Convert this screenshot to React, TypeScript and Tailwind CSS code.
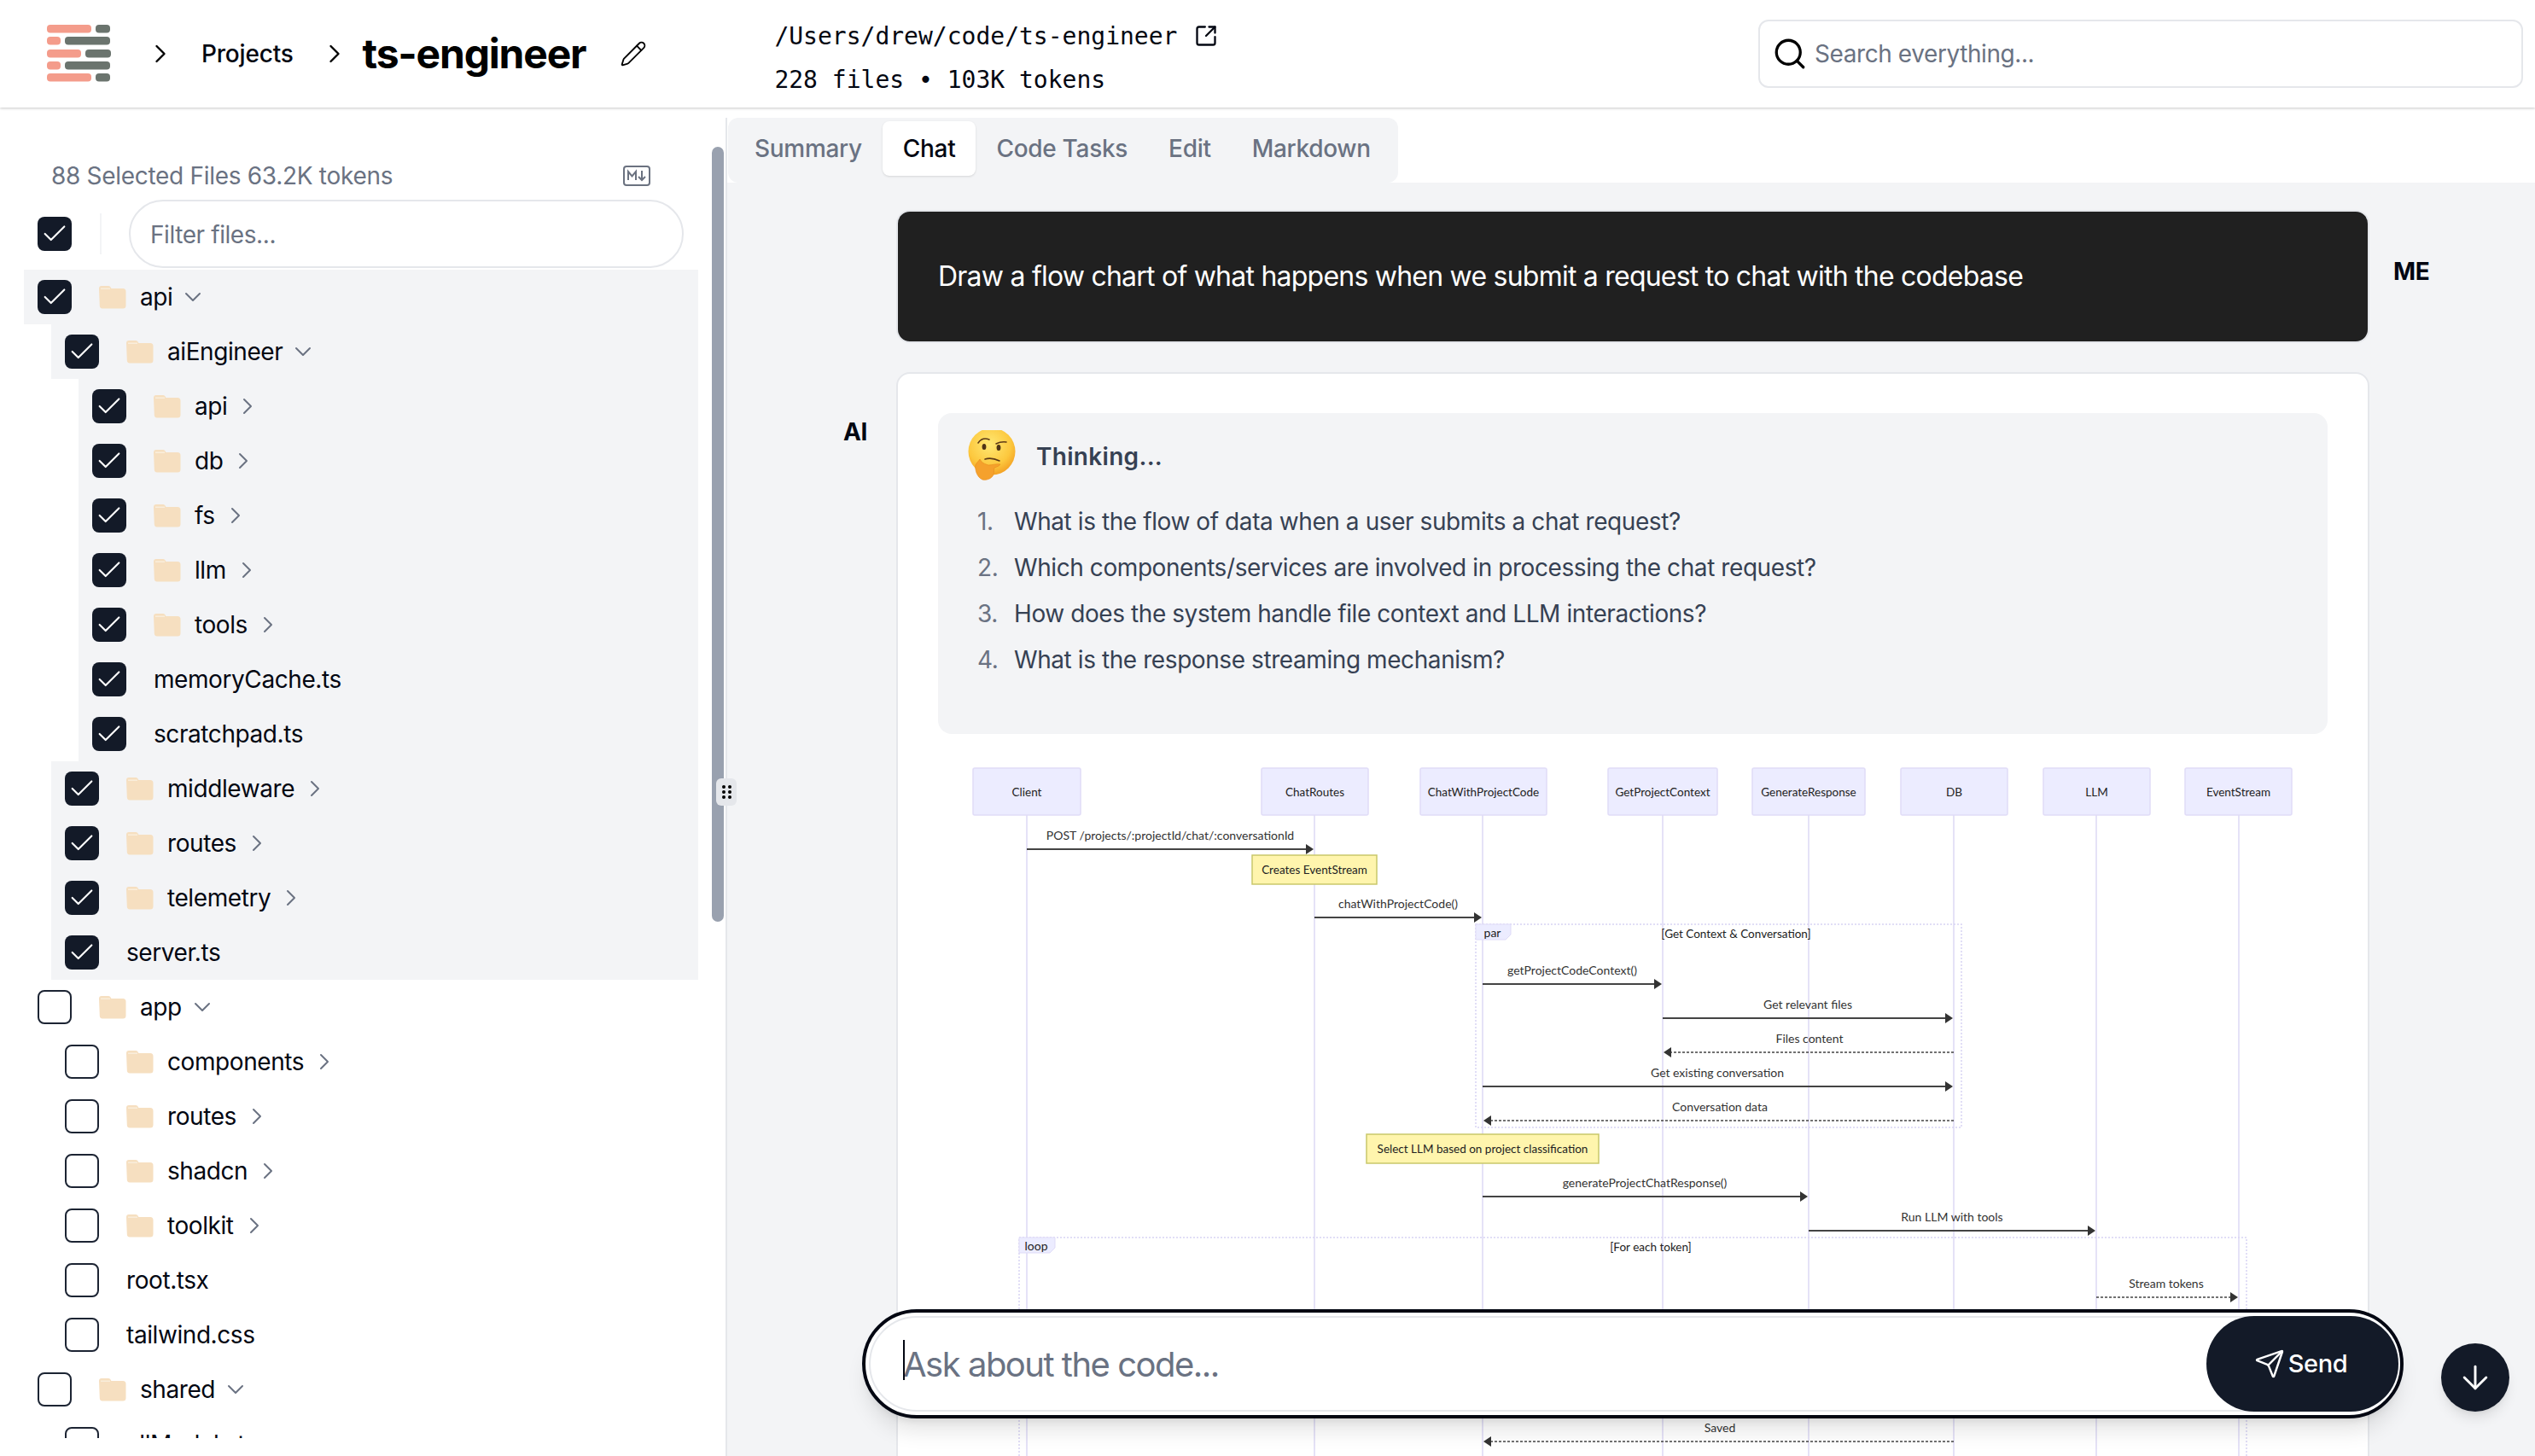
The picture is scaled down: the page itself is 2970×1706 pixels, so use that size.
import React from 'react'
import { Check, ChevronDown, ChevronRight, ArrowDown, Pencil, Search, Send, SquareArrowOutUpRight } from 'lucide-react'

type TreeNode = { name: string; open?: boolean; children?: TreeNode[]; folder?: boolean }

const apiTree: TreeNode = {
  name: 'api', folder: true, open: true, children: [
    {
      name: 'aiEngineer', folder: true, open: true, children: [
        { name: 'api', folder: true },
        { name: 'db', folder: true },
        { name: 'fs', folder: true },
        { name: 'llm', folder: true },
        { name: 'tools', folder: true },
        { name: 'memoryCache.ts' },
        { name: 'scratchpad.ts' },
      ],
    },
    { name: 'middleware', folder: true },
    { name: 'routes', folder: true },
    { name: 'telemetry', folder: true },
    { name: 'server.ts' },
  ],
}

const appTree: TreeNode = {
  name: 'app', folder: true, open: true, children: [
    { name: 'components', folder: true },
    { name: 'routes', folder: true },
    { name: 'shadcn', folder: true },
    { name: 'toolkit', folder: true },
    { name: 'root.tsx' },
    { name: 'tailwind.css' },
  ],
}

const sharedTree: TreeNode = {
  name: 'shared', folder: true, open: true, children: [{ name: 'allModels.ts' }],
}

const questions = [
  'What is the flow of data when a user submits a chat request?',
  'Which components/services are involved in processing the chat request?',
  'How does the system handle file context and LLM interactions?',
  'What is the response streaming mechanism?',
]

const tabs = ['Summary', 'Chat', 'Code Tasks', 'Edit', 'Markdown']

// x = left, w = width of the actor box, line = lifeline
const actors = [
  { name: 'Client', x: 1140, w: 126, line: 1203 },
  { name: 'ChatRoutes', x: 1478, w: 125, line: 1540 },
  { name: 'ChatWithProjectCode', x: 1664, w: 148, line: 1737 },
  { name: 'GetProjectContext', x: 1884, w: 128, line: 1948 },
  { name: 'GenerateResponse', x: 2053, w: 132, line: 2119 },
  { name: 'DB', x: 2227, w: 125, line: 2289 },
  { name: 'LLM', x: 2394, w: 125, line: 2456 },
  { name: 'EventStream', x: 2560, w: 125, line: 2623 },
]

const messages = [
  { label: 'POST /projects/:projectId/chat/:conversationId', cx: 1371, from: 1203, to: 1540, y: 995 },
  { label: 'chatWithProjectCode()', cx: 1638, from: 1540, to: 1737, y: 1075 },
  { label: 'getProjectCodeContext()', cx: 1842, from: 1737, to: 1948, y: 1153 },
  { label: 'Get relevant files', cx: 2118, from: 1948, to: 2289, y: 1193 },
  { label: 'Files content', cx: 2120, from: 2289, to: 1948, y: 1233, dashed: true },
  { label: 'Get existing conversation', cx: 2012, from: 1737, to: 2289, y: 1273 },
  { label: 'Conversation data', cx: 2015, from: 2289, to: 1737, y: 1313, dashed: true },
  { label: 'generateProjectChatResponse()', cx: 1927, from: 1737, to: 2119, y: 1402 },
  { label: 'Run LLM with tools', cx: 2287, from: 2119, to: 2456, y: 1442 },
  { label: 'Stream tokens', cx: 2538, from: 2456, to: 2623, y: 1520, dashed: true },
  { label: 'Saved', cx: 2015, from: 2289, to: 1737, y: 1689, dashed: true },
]

function Logo() {
  const rows = [
    [29, 52, 112, 17],
    [43, 16, 76, 53],
    [58, 40, 100, 30],
    [72, 16, 76, 53],
    [86, 52, 112, 17],
  ]
  return (
    <svg width="75" height="68" viewBox="55 29 75 68" className="shrink-0">
      {rows.map(([y, w, x2, w2]) => (
        <g key={y}>
          <rect x="55" y={y} width={w} height="9.5" rx="4" fill="#f49c8b" />
          <rect x={x2} y={y} width={w2} height="9.5" rx="4" fill="#6b746e" />
        </g>
      ))}
    </svg>
  )
}

function FolderIcon() {
  return (
    <svg width="32" height="27" viewBox="0 0 32 27" className="shrink-0">
      <path d="M3 0h8c1.6 0 2.6 1 3.4 3H28a3.5 3.5 0 0 1 3.5 3.5V23a3.5 3.5 0 0 1-3.5 3.5H4A3.5 3.5 0 0 1 .8 23L0 3a3 3 0 0 1 3-3z" fill="#f6dfc0" />
      <path d="M2 3.2h11" stroke="#fbf1e2" strokeWidth="1.2" />
    </svg>
  )
}

function Checkbox({ checked }: { checked: boolean }) {
  if (checked) {
    return (
      <div className="flex h-10 w-10 shrink-0 items-center justify-center rounded-lg bg-[#131a28] text-white">
        <Check size={34} strokeWidth={1.5} />
      </div>
    )
  }
  return <div className="h-10 w-10 shrink-0 rounded-lg border-2 border-[#1c2433]" />
}

function TreeRow({ node, checked }: { node: TreeNode; checked: boolean }) {
  return (
    <div>
      <div className={`flex h-16 items-center pl-4 ${checked ? 'bg-gray-100' : ''}`}>
        <Checkbox checked={checked} />
        {node.folder ? (
          <div className="ml-8 flex items-center">
            <FolderIcon />
            <span className="ml-4 text-[28px] text-gray-950">{node.name}</span>
            {node.open ? (
              <ChevronDown size={32} strokeWidth={1.5} className="ml-2 text-gray-500" />
            ) : (
              <ChevronRight size={32} strokeWidth={1.5} className="ml-2 text-gray-500" />
            )}
          </div>
        ) : (
          <span className="ml-8 text-[28px] text-gray-950">{node.name}</span>
        )}
      </div>
      {node.children && (
        <div className="ml-8">
          {node.children.map((child, i) => (
            <TreeRow key={child.name + i} node={child} checked={checked} />
          ))}
        </div>
      )}
    </div>
  )
}

function Sidebar() {
  return (
    <aside className="relative z-10 w-[850px] shrink-0 bg-white">
      <div className="mt-[60px] flex h-10 items-center justify-between pr-[88px] pl-[60px]">
        <span className="text-[28px] tracking-[-0.3px] text-gray-500">88 Selected Files 63.2K tokens</span>
        <svg width="32" height="24" viewBox="0 0 32 24" fill="none" stroke="#6b7280" strokeWidth="2">
          <rect x="1" y="1" width="30" height="22" rx="3" />
          <path d="M6 17V7l4.5 5.5L15 7v10M22 6v11M18 13l4 4 4-4" />
        </svg>
      </div>
      <div className="mt-2 flex h-20 items-center pl-11">
        <Checkbox checked />
        <div className="ml-[33px] h-12 w-0.5 bg-gray-100" />
        <input
          placeholder="Filter files..."
          className="ml-[32px] h-20 w-[650px] rounded-full border-2 border-gray-200 pt-0.5 pr-6 pl-[23px] text-[28px] outline-none placeholder:text-gray-500"
        />
      </div>
      <div className="mt-0.5 ml-7 h-[1369px] w-[790px] overflow-hidden">
        <TreeRow node={apiTree} checked />
        <TreeRow node={appTree} checked={false} />
        <TreeRow node={sharedTree} checked={false} />
      </div>
      {/* scrollbar and resize grip lie over the panel edge */}
      <div className="absolute top-[46px] left-[834px] h-[908px] w-3.5 rounded-full bg-gray-400" />
      <div className="absolute top-[786px] left-[839px] grid h-8 w-6 grid-cols-2 content-center justify-center gap-x-0.5 gap-y-[2px] rounded-md bg-gray-200 px-1.5">
        {[0, 1, 2, 3, 4, 5].map((i) => (
          <span key={i} className="h-1 w-1 justify-self-center rounded-full bg-black" />
        ))}
      </div>
    </aside>
  )
}

function Header() {
  return (
    <header className="relative z-20 flex h-[126px] shrink-0 items-center bg-white pr-[14px] pl-[55px] shadow-[0_1px_3px_rgba(0,0,0,0.22)]">
      <Logo />
      <ChevronRight size={36} strokeWidth={1.6} className="ml-10 shrink-0" />
      <span className="ml-[30px] text-[28px] font-medium tracking-[-0.2px] text-gray-950">Projects</span>
      <ChevronRight size={36} strokeWidth={1.6} className="ml-[30px] shrink-0" />
      <span className="ml-[15px] text-[48px] leading-none font-bold tracking-[-1.2px] text-black">ts-engineer</span>
      <Pencil size={32} strokeWidth={1.4} className="ml-10 shrink-0" />
      <div className="ml-[149px] flex flex-col pt-[9px] font-[family-name:'DejaVu_Sans_Mono',monospace] text-[28px] leading-[51px] tracking-normal text-gray-950">
        <div className="flex items-center">
          <span>/Users/drew/code/ts-engineer</span>
          <SquareArrowOutUpRight size={28} strokeWidth={2} className="ml-5" />
        </div>
        <span>228 files • 103K tokens</span>
      </div>
      <div className="ml-auto flex h-20 w-[896px] items-center rounded-xl border-2 border-gray-200 pl-[14px]">
        <Search size={42} strokeWidth={1.9} className="shrink-0 text-black" />
        <input
          placeholder="Search everything..."
          className="ml-2 flex-1 text-[28px] outline-none placeholder:text-gray-500"
        />
      </div>
    </header>
  )
}

function ThinkingFace() {
  return (
    <svg width="56" height="60" viewBox="8 7 56 60" className="shrink-0">
      <defs>
        <radialGradient id="face" cx="45%" cy="35%" r="70%">
          <stop offset="0%" stopColor="#ffe873" />
          <stop offset="65%" stopColor="#fcc83e" />
          <stop offset="100%" stopColor="#f29a1f" />
        </radialGradient>
      </defs>
      <circle cx="36" cy="32" r="27.5" fill="url(#face)" />
      <path d="M20 22c3-4.5 8-6 13-4M41 23c4-2 8-2.6 12-2" fill="none" stroke="#5d3a16" strokeWidth="1.6" strokeLinecap="round" />
      <ellipse cx="27" cy="26.5" rx="2.4" ry="3.6" fill="#4e3416" />
      <ellipse cx="44" cy="27.5" rx="2.4" ry="3.6" fill="#4e3416" />
      <path d="M28 41c5-1.6 11-.8 17 2" fill="none" stroke="#5d3a16" strokeWidth="1.6" strokeLinecap="round" />
      <path d="M22 41c-2 3-4 4-5 7-1 4 1 14 8 17 5 1 11-1 13-6 1-3 0-6 1-8 3-1 6-2 7-4-4-1-10 1-14 1-3-1-6-2-8-4l-2-3z" fill="#f5a12c" stroke="#e58a1b" strokeWidth="0.6" />
    </svg>
  )
}

function Message({ label, cx, from, to, y, dashed }: { label: string; cx: number; from: number; to: number; y: number; dashed?: boolean }) {
  const dir = to > from ? 1 : -1
  return (
    <g>
      <text x={cx} y={y - 11} textAnchor="middle" fontSize="14" fill="#333">{label}</text>
      <line x1={from} y1={y} x2={to - dir * 8} y2={y} stroke="#444" strokeWidth={dashed ? 1.5 : 2} strokeDasharray={dashed ? '3 2' : undefined} />
      <polygon points={`${to - dir},${y} ${to - dir * 10},${y - 6} ${to - dir * 10},${y + 6}`} fill="#333" />
    </g>
  )
}

function Note({ x, y, w, label }: { x: number; y: number; w: number; label: string }) {
  return (
    <g>
      <rect x={x} y={y} width={w} height="34" fill="#fff5ad" stroke="#c9c76b" strokeWidth="1.5" />
      <text x={x + w / 2} y={y + 22} textAnchor="middle" fontSize="13.5" fill="#222">{label}</text>
    </g>
  )
}

function Frame({ x, y, w, h, tag, tagW, title, titleX }: { x: number; y: number; w: number; h: number; tag: string; tagW: number; title: string; titleX: number }) {
  return (
    <g>
      <rect x={x} y={y} width={w} height={h} fill="none" stroke="#d8d3f3" strokeWidth="1.5" strokeDasharray="2 2" />
      <polygon points={`${x},${y} ${x + tagW},${y} ${x + tagW},${y + 12} ${x + tagW - 6},${y + 18} ${x},${y + 18}`} fill="#ececff" stroke="#dfdbf7" />
      <text x={x + tagW / 2 - 1} y={y + 15} textAnchor="middle" fontSize="14" fill="#222">{tag}</text>
      <text x={titleX} y={y + 16} textAnchor="middle" fontSize="13.5" fill="#222">{title}</text>
    </g>
  )
}

// sequence diagram, drawn in page coordinates through the viewBox
function SequenceDiagram() {
  return (
    <svg
      width="1628"
      height="900"
      viewBox="1099 880 1628 900"
      className="mt-5 block shrink-0 font-[family-name:Lato,sans-serif] tracking-normal"
    >
      {actors.map((a) => (
        <line key={a.name} x1={a.line} y1="955" x2={a.line} y2="1780" stroke="#dcd8f5" strokeWidth="1.5" />
      ))}
      {actors.map((a) => (
        <g key={a.name}>
          <rect x={a.x} y="900" width={a.w} height="55" rx="2" fill="#ececff" stroke="#e0dcf8" strokeWidth="1.5" />
          <text x={a.x + a.w / 2} y="933" textAnchor="middle" fontSize="13.5" fill="#222">{a.name}</text>
        </g>
      ))}
      <Frame x={1729} y={1083} w={569} h={238} tag="par" tagW={41} title="[Get Context & Conversation]" titleX={2034} />
      <Frame x={1194} y={1450} w={1438} h={300} tag="loop" tagW={42} title="[For each token]" titleX={1934} />
      {messages.map((m) => (
        <Message key={m.label} {...m} />
      ))}
      <Note x={1467} y={1002} w={146} label="Creates EventStream" />
      <Note x={1601} y={1329} w={272} label="Select LLM based on project classification" />
    </svg>
  )
}

function ChatInput() {
  return (
    <div className="absolute right-[154px] bottom-[44px] h-[128px] w-[1806px] rounded-full border-4 border-gray-950 bg-white p-1 pr-0.5 shadow-xl">
      <div className="relative flex h-full items-center rounded-full border-2 border-gray-200">
        <span className="absolute top-[26px] left-[38px] h-[47px] w-0.5 bg-gray-950" />
        <input
          placeholder="Ask about the code..."
          className="ml-[38px] flex-1 pt-0.5 text-[40px] tracking-[-1.5px] outline-none placeholder:text-gray-500"
        />
        <button className="-my-0.5 -mr-0.5 flex h-[112px] w-[225px] items-center justify-center gap-1 rounded-full bg-[#131a28] pr-1 text-[29px] font-medium text-white">
          <Send size={36} strokeWidth={1.6} />
          Send
        </button>
      </div>
    </div>
  )
}

export default function App() {
  return (
    <div className="flex h-[1706px] w-[2970px] flex-col overflow-hidden bg-white font-[family-name:Inter,sans-serif] tracking-[-0.42px] antialiased">
      <Header />
      <div className="flex min-h-0 flex-1">
        <Sidebar />
        <main className="flex min-w-0 flex-1 flex-col pt-3">
          {/* tabs */}
          <div className="flex h-[76px] shrink-0 border-l-2 border-gray-200">
            <div className="ml-px flex h-full rounded-xl bg-gray-100 pt-1 pr-2 pb-2 pl-[7px]">
              {tabs.map((t) => (
                <button
                  key={t}
                  className={`h-16 rounded-lg px-6 text-[28px] font-medium tracking-[-0.3px] ${t === 'Chat' ? 'bg-white text-gray-950 shadow-sm' : 'text-gray-500'}`}
                >
                  {t}
                </button>
              ))}
            </div>
          </div>

          {/* chat */}
          <div className="relative min-h-0 flex-1 overflow-hidden border-l-2 border-gray-200 bg-gray-100 pt-8">
            <div className="flex items-start">
              <div className="w-[198px] shrink-0" />
              <div className="flex h-[156px] w-[1726px] shrink-0 items-center rounded-2xl border-2 border-gray-200 bg-[#202020] px-[47px] text-[32px] tracking-[-0.77px] text-white">
                Draw a flow chart of what happens when we submit a request to chat with the codebase
              </div>
              <div className="pt-[52px] pl-7 text-[28px] leading-10 font-bold text-gray-950">ME</div>
            </div>

            <div className="mt-[34px] flex items-start">
              <div className="w-[198px] shrink-0 pt-[50px] pr-[34px] text-right text-[28px] leading-10 font-bold text-gray-950">AI</div>
              <div className="h-[1300px] w-[1726px] shrink-0 rounded-2xl border-2 border-gray-200 bg-white px-[47px] pt-[46px]">
                <div className="h-[376px] rounded-2xl bg-gray-100 px-[35px] pt-[22px]">
                  <div className="flex h-14 items-center">
                    <ThinkingFace />
                    <span className="mt-0.5 ml-[24px] text-[28px] font-semibold tracking-[0.3px] text-gray-700">Thinking...</span>
                  </div>
                  <ol className="mt-[22px]">
                    {questions.map((q, i) => (
                      <li key={q} className="flex h-[54px] items-center text-[28px] text-gray-700">
                        <span className="w-[54px] shrink-0 pl-[11px] text-gray-500">{i + 1}.</span>
                        {q}
                      </li>
                    ))}
                  </ol>
                </div>
                <SequenceDiagram />
              </div>
            </div>

            <ChatInput />
            <button className="absolute right-[30px] bottom-[52px] flex h-20 w-20 items-center justify-center rounded-full bg-[#131a28] text-white shadow-lg">
              <ArrowDown size={44} strokeWidth={1.6} />
            </button>
          </div>
        </main>
      </div>
    </div>
  )
}
